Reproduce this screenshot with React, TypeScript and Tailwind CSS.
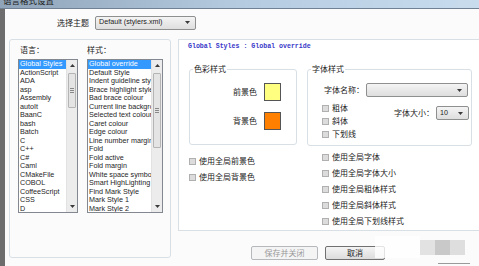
import React from "react";

const cjk = "font-['Noto_Sans_CJK_SC','Noto_Sans',sans-serif]";
const latin = "font-['Liberation_Sans','Noto_Sans_CJK_SC',sans-serif]";

const langs = [
  "Global Styles", "ActionScript", "ADA", "asp", "Assembly", "autoIt", "BaanC", "bash", "Batch",
  "C", "C++", "C#", "Caml", "CMakeFile", "COBOL", "CoffeeScript", "CSS", "D",
];
const styles = [
  "Global override", "Default Style", "Indent guideline style", "Brace highlight style", "Bad brace colour",
  "Current line background colour", "Selected text colour", "Caret colour", "Edge colour", "Line number margin",
  "Fold", "Fold active", "Fold margin", "White space symbol", "Smart HighLighting", "Find Mark Style",
  "Mark Style 1", "Mark Style 2",
];

function Arrow({ up }: { up?: boolean }) {
  return (
    <svg width="5" height="3" viewBox="0 0 5 3" className="shrink-0">
      <polygon points={up ? "0,3 5,3 2.5,0" : "0,0 5,0 2.5,3"} fill="#3a3a3a" />
    </svg>
  );
}

function ListBox({ items, w, thumbH }: { items: string[]; w: string; thumbH: string }) {
  return (
    <div className={`flex h-[154px] shrink-0 border border-[#828790] bg-white ${w}`}>
      <div className={`min-w-0 flex-1 overflow-hidden text-[7.2px] text-[#1e1e1e] ${latin}`}>
        {items.map((t, i) => (
          <div
            key={t}
            className={`h-[8.5px] whitespace-nowrap px-[1px] leading-[8.5px] ${i === 0 ? "bg-[#3399ff] text-white" : ""}`}
          >
            {t}
          </div>
        ))}
      </div>
      <div className="flex w-[11px] shrink-0 flex-col border-l border-[#e2e2e2] bg-[#ececec]">
        <div className="flex h-[11px] items-center justify-center">
          <Arrow up />
        </div>
        <div className="flex flex-1 flex-col px-[1px] pt-[2px]">
          <div className={`flex flex-col items-center justify-center rounded-[1px] border border-[#b4b4b4] bg-[#e4e4e4] ${thumbH}`}>
            <div className="h-[1px] w-[4px] bg-[#888]" />
            <div className="mt-[1px] h-[1px] w-[4px] bg-[#888]" />
            <div className="mt-[1px] h-[1px] w-[4px] bg-[#888]" />
          </div>
        </div>
        <div className="flex h-[11px] items-center justify-center">
          <Arrow />
        </div>
      </div>
    </div>
  );
}

function Select({ w, text }: { w: string; text: string }) {
  return (
    <div
      className={`flex h-[14px] shrink-0 items-center justify-between rounded-[2px] border border-[#8e8f8f] bg-gradient-to-b from-[#f4f4f4] to-[#dedede] pl-[3px] pr-[5px] text-[7.2px] text-[#222] ${latin} ${w}`}
    >
      <span className="whitespace-nowrap">{text}</span>
      <Arrow />
    </div>
  );
}

function Check({ label }: { label: string }) {
  return (
    <div className="flex h-[10px] items-center whitespace-nowrap">
      <div className="h-[7px] w-[7px] shrink-0 border border-[#b0b0b0] bg-[#dcdcdc]" />
      <span className={`ml-[3px] whitespace-nowrap text-[8px] leading-[10px] text-[#222] ${cjk}`}>{label}</span>
    </div>
  );
}

export default function App() {
  return (
    <div className="relative h-[266px] w-[479px] overflow-hidden bg-[#fbfbfb]">
      {/* title bar */}
      <div className="h-[9px] overflow-hidden border-b border-[#6f8192] bg-gradient-to-r from-[#8fa4b8] via-[#b5cbe0] to-[#c8dcee]">
        <div className={`-mt-[5px] pl-[3px] text-[8.5px] leading-[10px] text-[#1a1a1a] ${cjk}`}>语言格式设置</div>
      </div>
      <div className="flex h-[257px]">
        <div className="w-[5px] shrink-0 bg-[#6d6d6d]" />
        <div className="flex min-w-0 flex-1 flex-col">
          {/* theme row */}
          <div className="mt-[6px] flex h-[15px] items-center pl-[52px]">
            <span className={`whitespace-nowrap text-[8px] text-[#222] ${cjk}`}>选择主题</span>
            <div className="ml-[6px]">
              <Select w="w-[101px]" text="Default (stylers.xml)" />
            </div>
          </div>
          {/* main row */}
          <div className="mt-[9px] flex">
            {/* left group */}
            <div className="ml-[4px] h-[219px] w-[162px] shrink-0 rounded-[3px] border border-[#d8e0e6] bg-[#fbfbfb] pl-[8px] pt-[4px]">
              <div className="flex gap-[9px]">
                <div className="flex shrink-0 flex-col">
                  <div className={`h-[15px] whitespace-nowrap pl-[2px] text-[8px] leading-[12px] text-[#222] ${cjk}`}>语言：</div>
                  <ListBox items={langs} w="w-[60px]" thumbH="h-[35px]" />
                </div>
                <div className="flex shrink-0 flex-col">
                  <div className={`h-[15px] whitespace-nowrap text-[8px] leading-[12px] text-[#222] ${cjk}`}>样式：</div>
                  <ListBox items={styles} w="w-[76px]" thumbH="h-[75px]" />
                </div>
              </div>
            </div>
            {/* right column */}
            <div className="ml-[7px] flex shrink-0 flex-col">
              <div className="h-[192px] w-[320px] border border-[#d8e0e6] bg-white pl-[9px] pt-[2px]">
                <div className="whitespace-nowrap font-['Liberation_Mono',monospace] text-[6.6px] font-bold leading-[10px] text-[#3838c8]">
                  Global Styles : Global override
                </div>
                <div className="mt-[17px] flex">
                  {/* colour group */}
                  <div className="flex shrink-0 flex-col">
                    <div className="relative ml-[1px] h-[76px] w-[108px] rounded-[3px] border border-[#d8e0e6]">
                      <span className={`absolute -top-[6px] left-[3px] whitespace-nowrap bg-white px-[1px] text-[8px] leading-[10px] text-[#222] ${cjk}`}>
                        色彩样式
                      </span>
                      <div className="mt-[13px] flex flex-col items-end gap-[11px] pr-[15px]">
                        <div className="flex items-center">
                          <span className={`whitespace-nowrap text-[8px] text-[#222] ${cjk}`}>前景色</span>
                          <div className="ml-[7px] h-[18px] w-[17px] shrink-0 border border-[#555] bg-[#ffff80]" />
                        </div>
                        <div className="flex items-center">
                          <span className={`whitespace-nowrap text-[8px] text-[#222] ${cjk}`}>背景色</span>
                          <div className="ml-[7px] h-[18px] w-[17px] shrink-0 border border-[#555] bg-[#ff8000]" />
                        </div>
                      </div>
                    </div>
                    <div className="ml-[1px] mt-[11px] flex flex-col gap-[6px]">
                      <Check label="使用全局前景色" />
                      <Check label="使用全局背景色" />
                    </div>
                  </div>
                  {/* font group */}
                  <div className="ml-[10px] flex shrink-0 flex-col">
                    <div className="relative h-[77px] w-[165px] rounded-[3px] border border-[#d8e0e6]">
                      <span className={`absolute -top-[6px] left-[3px] whitespace-nowrap bg-white px-[1px] text-[8px] leading-[10px] text-[#222] ${cjk}`}>
                        字体样式
                      </span>
                      <div className="mt-[13px] flex items-center pl-[16px]">
                        <span className={`whitespace-nowrap text-[8px] text-[#222] ${cjk}`}>字体名称：</span>
                        <div className="ml-[2px]">
                          <Select w="w-[102px]" text="" />
                        </div>
                      </div>
                      <div className="mt-[6px] flex pl-[14px]">
                        <div className="flex w-[72px] shrink-0 flex-col gap-[3px]">
                          <Check label="粗体" />
                          <Check label="斜体" />
                          <Check label="下划线" />
                        </div>
                        <div className="mt-[3px] flex h-[14px] items-center">
                          <span className={`whitespace-nowrap text-[8px] text-[#222] ${cjk}`}>字体大小：</span>
                          <div className="ml-[2px]">
                            <Select w="w-[33px]" text="10" />
                          </div>
                        </div>
                      </div>
                    </div>
                    <div className="ml-[15px] mt-[6px] flex flex-col gap-[6px]">
                      <Check label="使用全局字体" />
                      <Check label="使用全局字体大小" />
                      <Check label="使用全局粗体样式" />
                      <Check label="使用全局斜体样式" />
                      <Check label="使用全局下划线样式" />
                    </div>
                  </div>
                </div>
              </div>
              {/* buttons */}
              <div className="mt-[15px] flex gap-[7px] pl-[73px]">
                <div className={`flex h-[14px] w-[67px] shrink-0 items-center justify-center whitespace-nowrap rounded-[2px] border border-[#b5b9bc] bg-[#f4f4f4] text-[8px] text-[#9a9a9a] ${cjk}`}>
                  保存并关闭
                </div>
                <div className={`flex h-[14px] w-[60px] shrink-0 items-center justify-center whitespace-nowrap rounded-[2px] border border-[#707070] bg-gradient-to-b from-[#f4f4f4] to-[#dcdcdc] text-[8px] text-[#222] ${cjk}`}>
                  取消
                </div>
              </div>
            </div>
          </div>
        </div>
      </div>
      {/* blurred watermark blocks */}
      <div className="absolute left-[375px] top-[236px] h-[22px] w-[45px] bg-white/80" />
      <div className="absolute left-[420px] top-[240px] h-[15px] w-[15px] bg-[#e2e2e2]" />
      <div className="absolute left-[435px] top-[240px] h-[15px] w-[15px] bg-[#c9c9c9]" />
      <div className="absolute left-[450px] top-[240px] h-[15px] w-[15px] bg-[#dedede]" />
      <div className="absolute left-[438px] top-[263px] h-[1px] w-[32px] bg-[#9a9a9a]" />
    </div>
  );
}
